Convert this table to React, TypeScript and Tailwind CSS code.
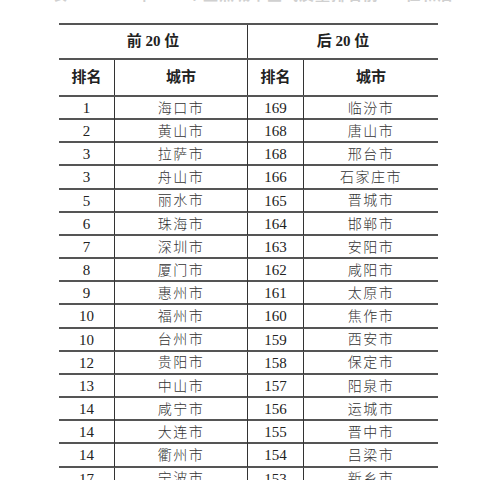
const top20 = [
  ['1', '海口市'],
  ['2', '黄山市'],
  ['3', '拉萨市'],
  ['3', '舟山市'],
  ['5', '丽水市'],
  ['6', '珠海市'],
  ['7', '深圳市'],
  ['8', '厦门市'],
  ['9', '惠州市'],
  ['10', '福州市'],
  ['10', '台州市'],
  ['12', '贵阳市'],
  ['13', '中山市'],
  ['14', '咸宁市'],
  ['14', '大连市'],
  ['14', '衢州市'],
  ['17', '宁波市'],
]

const bottom20 = [
  ['169', '临汾市'],
  ['168', '唐山市'],
  ['168', '邢台市'],
  ['166', '石家庄市'],
  ['165', '晋城市'],
  ['164', '邯郸市'],
  ['163', '安阳市'],
  ['162', '咸阳市'],
  ['161', '太原市'],
  ['160', '焦作市'],
  ['159', '西安市'],
  ['158', '保定市'],
  ['157', '阳泉市'],
  ['156', '运城市'],
  ['155', '晋中市'],
  ['154', '吕梁市'],
  ['153', '新乡市'],
]

const cols = 'grid grid-cols-[56px_133px_56px_134px]'

export default function App() {
  return (
    <div
      className="w-[480px] h-[480px] overflow-hidden bg-white text-[#222]"
      style={{ fontFamily: '"Liberation Serif", "Noto Sans CJK SC", serif' }}
    >
      {/* title line, cut off by the top of the photo */}
      <div className="h-[6px] overflow-hidden pl-[52px]">
        <div className="-mt-[16px] text-[15px] font-bold text-[#d0d0d0] whitespace-nowrap tracking-[1px]">
          表 2　2020 年 168 个重点城市空气质量排名前 20 位和后 20 位城市
        </div>
      </div>

      <div className="ml-[59px] mt-[17px] w-[379px]">
        {/* header 1 */}
        <div className="grid grid-cols-[189px_190px] h-[35px] border-t-2 border-[#555]">
          <div className="flex items-center justify-center border-r border-[#333] font-bold text-[15px]">
            前 20 位
          </div>
          <div className="flex items-center justify-center font-bold text-[15px]">
            后 20 位
          </div>
        </div>

        {/* header 2 */}
        <div className={`${cols} h-[37px] border-t-2 border-[#555] font-bold text-[15px]`}>
          <div className="flex items-center justify-center border-r border-[#333]">排名</div>
          <div className="flex items-center justify-center border-r border-[#333]">城市</div>
          <div className="flex items-center justify-center border-r border-[#333]">排名</div>
          <div className="flex items-center justify-center">城市</div>
        </div>

        {top20.map((row, i) => (
          <div key={i} className={`${cols} h-[23.17px] border-t-2 border-[#555]`}>
            <div className="flex items-center justify-center border-r border-[#333] text-[15px]">
              {row[0]}
            </div>
            <div className="flex items-center justify-center border-r border-[#333] text-[14px] font-light tracking-[1.5px] text-[#333]">
              {row[1]}
            </div>
            <div className="flex items-center justify-center border-r border-[#333] text-[15px]">
              {bottom20[i][0]}
            </div>
            <div className="flex items-center justify-center text-[14px] font-light tracking-[1.5px] text-[#333]">
              {bottom20[i][1]}
            </div>
          </div>
        ))}
      </div>
    </div>
  )
}
